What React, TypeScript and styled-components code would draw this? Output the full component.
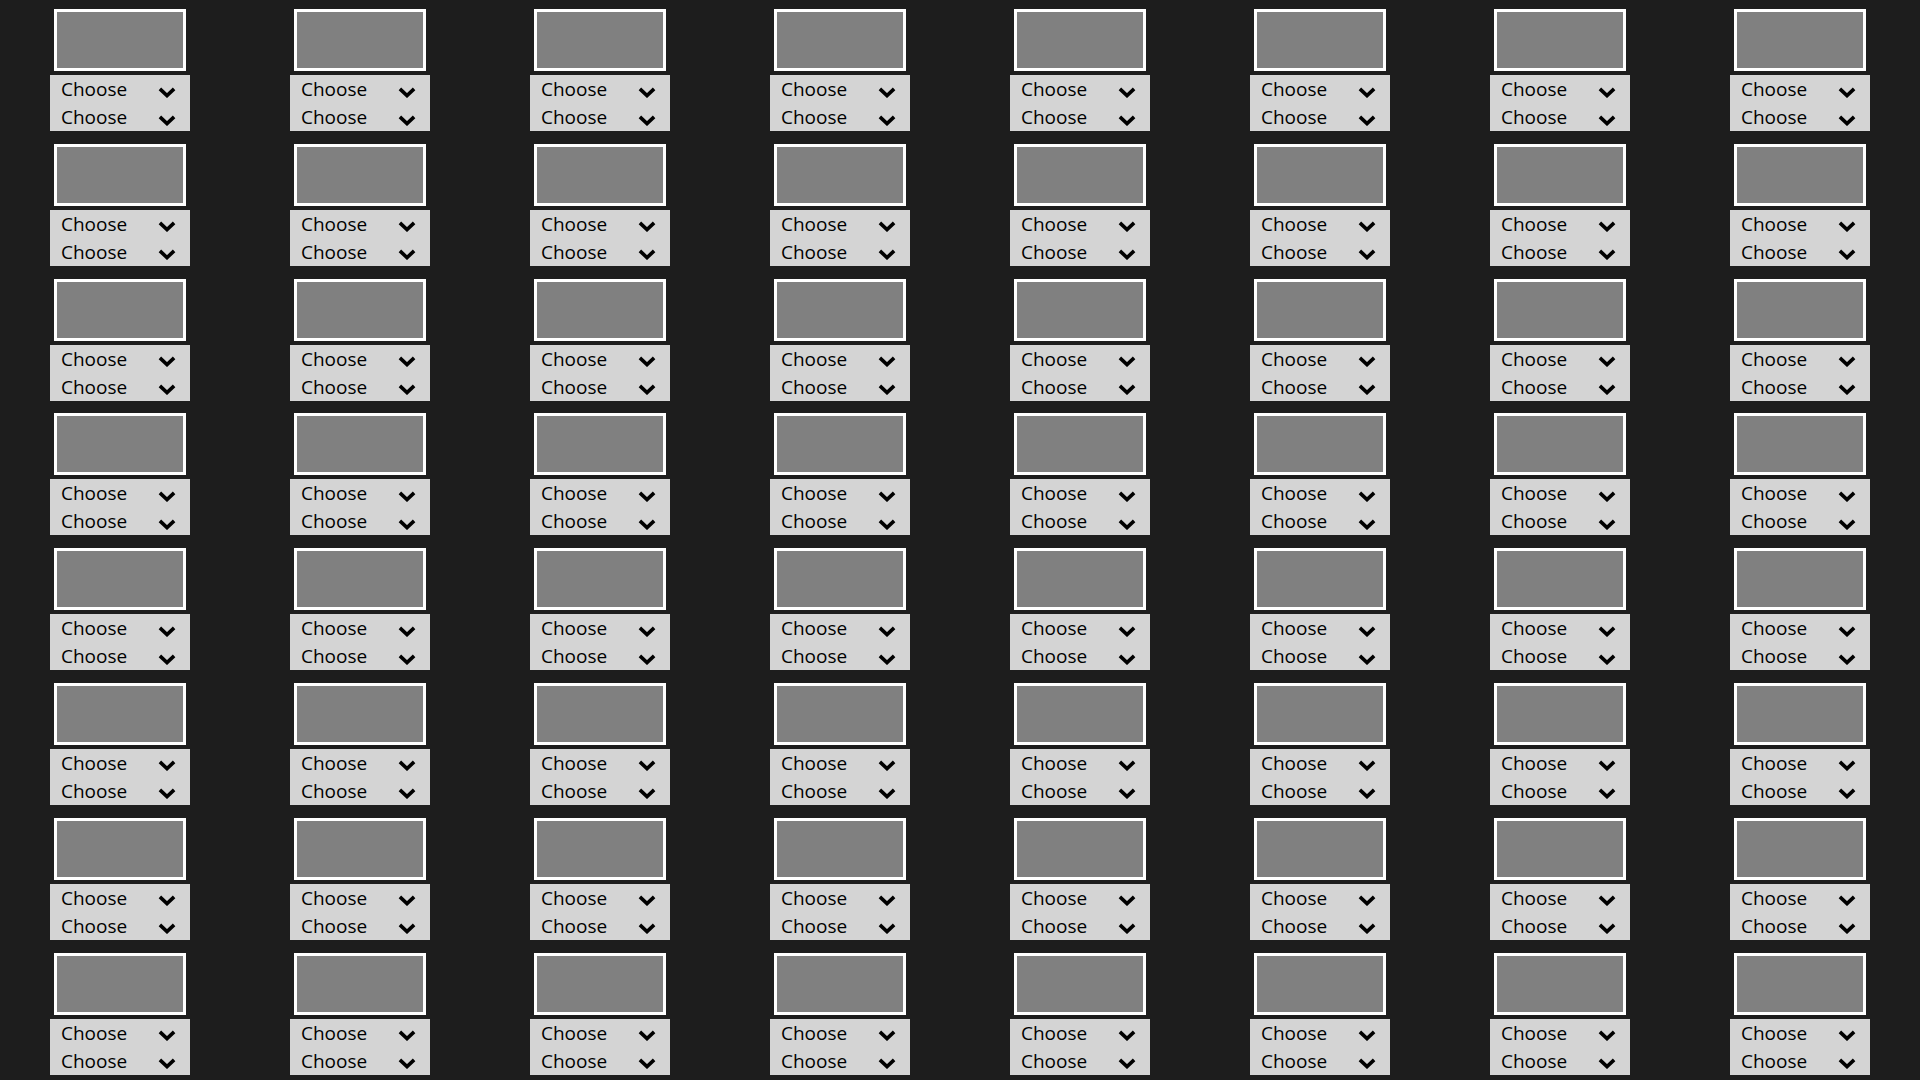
import React from 'react';
import styled, { createGlobalStyle } from 'styled-components';

const GlobalStyle = createGlobalStyle`
  html, body {
    margin: 0;
    padding: 0;
    background: #1d1d1d;
    font-family: "Open Sans", "Noto Sans", sans-serif;
  }
`;

const Grid = styled.div`
  display: grid;
  grid-template-columns: repeat(8, 140px);
  justify-content: space-between;
  align-content: start;
  row-gap: 12.8px;
  padding: 9px 50px 0;
  width: 1920px;
  height: 1080px;
  box-sizing: border-box;
  overflow: hidden;
`;

const Cell = styled.div`
  display: flex;
  flex-direction: column;
  align-items: center;
  gap: 4px;
`;

const Thumb = styled.div`
  width: 132px;
  height: 62px;
  box-sizing: border-box;
  border: 3px solid #ffffff;
  background: #808080;
`;

const Panel = styled.div`
  width: 140px;
  background: #d4d4d4;
  display: flex;
  flex-direction: column;
`;

const Row = styled.div`
  height: 28px;
  display: flex;
  align-items: center;
  justify-content: space-between;
  padding: 0 14px 0 11px;
`;

const Label = styled.span`
  font-size: 19px;
  line-height: 28px;
  color: #000;
`;

const Chevron = styled.svg`
  width: 18px;
  height: 11px;
  margin-top: 6px;
`;

const ChevronIcon: React.FC = () => (
  <Chevron viewBox="0 0 18 11">
    <path d="M1.9 1.9 L9 8.6 L16.1 1.9" fill="none" stroke="#000" strokeWidth="3.6" />
  </Chevron>
);

const Dropdown: React.FC<{ label?: string }> = ({ label = 'Choose' }) => (
  <Row>
    <Label>{label}</Label>
    <ChevronIcon />
  </Row>
);

const cells = Array.from({ length: 64 }, (_, i) => i);

export default function App() {
  return (
    <>
      <GlobalStyle />
      <Grid>
        {cells.map((i) => (
          <Cell key={i}>
            <Thumb />
            <Panel>
              <Dropdown />
              <Dropdown />
            </Panel>
          </Cell>
        ))}
      </Grid>
    </>
  );
}
